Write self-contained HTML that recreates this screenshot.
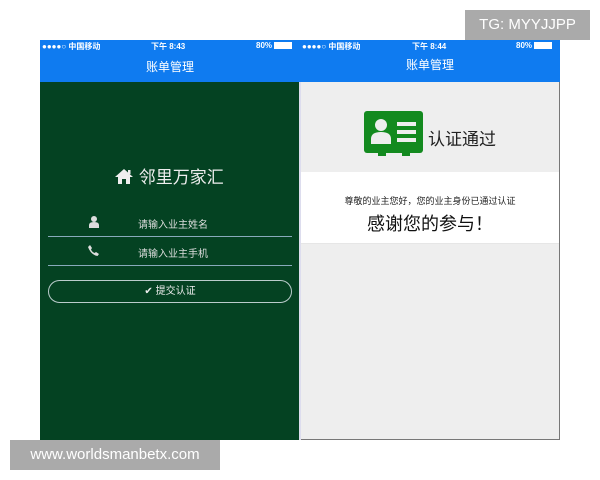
<!DOCTYPE html>
<html><head><meta charset="utf-8"><style>
*{margin:0;padding:0;box-sizing:border-box}
body{width:600px;height:480px;background:#fff;position:relative;overflow:hidden;font-family:"Liberation Sans","Noto Sans CJK SC",sans-serif}
.abs{position:absolute}
.blue{background:#0f7bf0;color:#fff}
.sb{font-size:8px;font-weight:bold;top:1px;color:#fff}
</style></head><body>
<div class="abs" style="left:40px;top:40px;width:260px;height:400px;background:#044222"></div>
<div class="abs" style="left:300px;top:40px;width:260px;height:400px;background:#eeeeee;border-right:1px solid #777;border-bottom:1px solid #777"></div>
<div class="abs blue" style="left:40px;top:40px;width:520px;height:42px"></div>
<div class="abs" style="left:299px;top:82px;width:2px;height:358px;background:#dde"></div>
<!-- status bars -->
<div class="abs sb" style="left:42px;top:41px">●●●●○ 中国移动</div>
<div class="abs sb" style="left:151px;top:41px">下午 8:43</div>
<div class="abs sb" style="left:256px;top:41px">80% <span style="display:inline-block;width:18px;height:7px;background:#fff;vertical-align:-1px"></span></div>
<div class="abs sb" style="left:302px;top:41px">●●●●○ 中国移动</div>
<div class="abs sb" style="left:412px;top:41px">下午 8:44</div>
<div class="abs sb" style="left:516px;top:41px">80% <span style="display:inline-block;width:18px;height:7px;background:#fff;vertical-align:-1px"></span></div>
<div class="abs" style="left:40px;top:58px;width:260px;text-align:center;color:#fff;font-size:12px">账单管理</div>
<div class="abs" style="left:300px;top:56px;width:260px;text-align:center;color:#fff;font-size:12px">账单管理</div>
<!-- left content -->
<div class="abs" style="left:114px;top:163px;color:#eee;font-size:17px">
<svg width="20" height="17" viewBox="0 0 20 17" style="vertical-align:-2px"><path d="M10 1L1 9h3v7h4v-5h4v5h4V9h3z" fill="#eee"/><rect x="14" y="2" width="2.5" height="4" fill="#eee"/></svg> 邻里万家汇</div>
<svg class="abs" style="left:89px;top:216px" width="10" height="12" viewBox="0 0 10 12"><circle cx="5" cy="3" r="3" fill="#ddd"/><path d="M0 12v-3q0-3 5-3t5 3v3z" fill="#ddd"/></svg>
<div class="abs" style="left:138px;top:216px;color:#ddd;font-size:10px">请输入业主姓名</div>
<div class="abs" style="left:48px;top:236px;width:244px;height:1px;background:#8ab"></div>
<svg class="abs" style="left:88px;top:245px" width="11" height="11" viewBox="0 0 11 11"><path d="M2 0l2 3-1 1.5q1 2.5 3.5 3.5L8 7l3 2-1.5 2Q3 10 0 2z" fill="#ddd"/></svg>
<div class="abs" style="left:138px;top:245px;color:#ddd;font-size:10px">请输入业主手机</div>
<div class="abs" style="left:48px;top:265px;width:244px;height:1px;background:#8ab"></div>
<div class="abs" style="left:48px;top:280px;width:244px;height:23px;border:1px solid #bcc;border-radius:12px;color:#eee;font-size:10px;text-align:center;line-height:21px">✔ 提交认证</div>
<!-- right content -->
<div class="abs" style="left:301px;top:172px;width:258px;height:72px;background:#fff;border-bottom:1px solid #e6e6e6"></div>
<svg class="abs" style="left:364px;top:111px" width="59" height="45" viewBox="0 0 59 45"><rect width="59" height="42" rx="3" fill="#138a1f"/><rect x="14" y="40" width="8" height="5" fill="#138a1f"/><rect x="38" y="40" width="8" height="5" fill="#138a1f"/><circle cx="17" cy="14" r="6" fill="#eee"/><path d="M7 33v-5q0-7 10-7t10 7v5z" fill="#eee"/><rect x="33" y="11" width="19" height="4" fill="#eee"/><rect x="33" y="19" width="19" height="4" fill="#eee"/><rect x="33" y="27" width="19" height="4" fill="#eee"/></svg>
<div class="abs" style="left:428px;top:125px;font-size:17px;color:#222">认证通过</div>
<div class="abs" style="left:300px;top:194px;width:260px;text-align:center;font-size:9px;color:#222">尊敬的业主您好，您的业主身份已通过认证</div>
<div class="abs" style="left:300px;top:210px;width:260px;text-align:center;font-size:18px;color:#111">感谢您的参与！</div>
<!-- watermarks -->
<div class="abs" style="left:465px;top:10px;width:125px;height:30px;background:#aaa;color:#fff;font-size:15px;line-height:30px;text-align:center">TG: MYYJJPP</div>
<div class="abs" style="left:10px;top:440px;width:210px;height:30px;background:#aaa;color:#fff;font-size:15px;line-height:30px;text-align:center">www.worldsmanbetx.com</div>
</body></html>
